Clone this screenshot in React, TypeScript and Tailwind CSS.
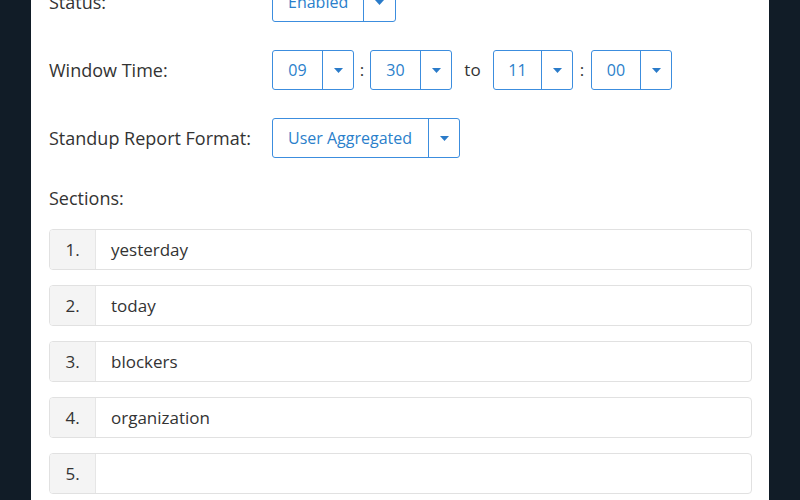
const FONT = { fontFamily: '"Open Sans", "Noto Sans", sans-serif' };

function Caret() {
  return (
    <svg width="9" height="5" viewBox="0 0 9 5" className="block">
      <path d="M0 0h9L4.5 5z" fill="#2a7bc9" />
    </svg>
  );
}

function Select({ value, valueW, caretW = 31, center = false }: { value: string; valueW: number; caretW?: number; center?: boolean }) {
  return (
    <div className="flex h-[40px] rounded-[3px] border border-[#3c8dde] text-[16px] text-[#2b7fcb]">
      <div
        className={center ? 'flex items-center justify-center' : 'flex items-center pl-[15px]'}
        style={{ width: valueW }}
      >
        {value}
      </div>
      <div className="flex items-center justify-center border-l border-[#3c8dde]" style={{ width: caretW }}>
        <Caret />
      </div>
    </div>
  );
}

function Row({ label, children }: { label: string; children: React.ReactNode }) {
  return (
    <div className="flex h-[40px] items-center">
      <div className="w-[223px] text-[18px] font-medium text-[#333]">{label}</div>
      {children}
    </div>
  );
}

const sections = ['yesterday', 'today', 'blockers', 'organization', ''];

export default function App() {
  return (
    <div className="h-[500px] overflow-hidden bg-[#111c27] px-[31px]" style={FONT}>
      <div className="min-h-[560px] bg-white pl-[18px] pr-[17px]">
        <div className="-mt-[18px] flex flex-col gap-[28px]">
          <Row label="Status:">
            <Select value="Enabled" valueW={90} caretW={32} />
          </Row>
          <Row label="Window Time:">
            <div className="flex items-center">
              <Select value="09" valueW={49} center />
              <span className="w-[16px] text-center text-[17px] text-[#333]">:</span>
              <Select value="30" valueW={49} center />
              <span className="w-[41px] text-center text-[17px] text-[#333]">to</span>
              <Select value="11" valueW={47} center />
              <span className="w-[18px] text-center text-[17px] text-[#333]">:</span>
              <Select value="00" valueW={48} center />
            </div>
          </Row>
          <Row label="Standup Report Format:">
            <Select value="User Aggregated" valueW={155} />
          </Row>
        </div>
        <div className="mt-[27px] text-[18px] font-medium text-[#333]">Sections:</div>
        <div className="mt-[17px] flex flex-col gap-[15px]">
          {sections.map((s, i) => (
            <div key={i} className="flex h-[41px] overflow-hidden rounded-[4px] border border-[#e1e1e1] text-[17px] text-[#333]">
              <div className="flex w-[46px] items-center justify-center border-r border-[#e6e6e6] bg-[#f4f4f4]">{i + 1}.</div>
              <div className="flex flex-1 items-center pl-[15px]">{s}</div>
            </div>
          ))}
        </div>
      </div>
    </div>
  );
}
